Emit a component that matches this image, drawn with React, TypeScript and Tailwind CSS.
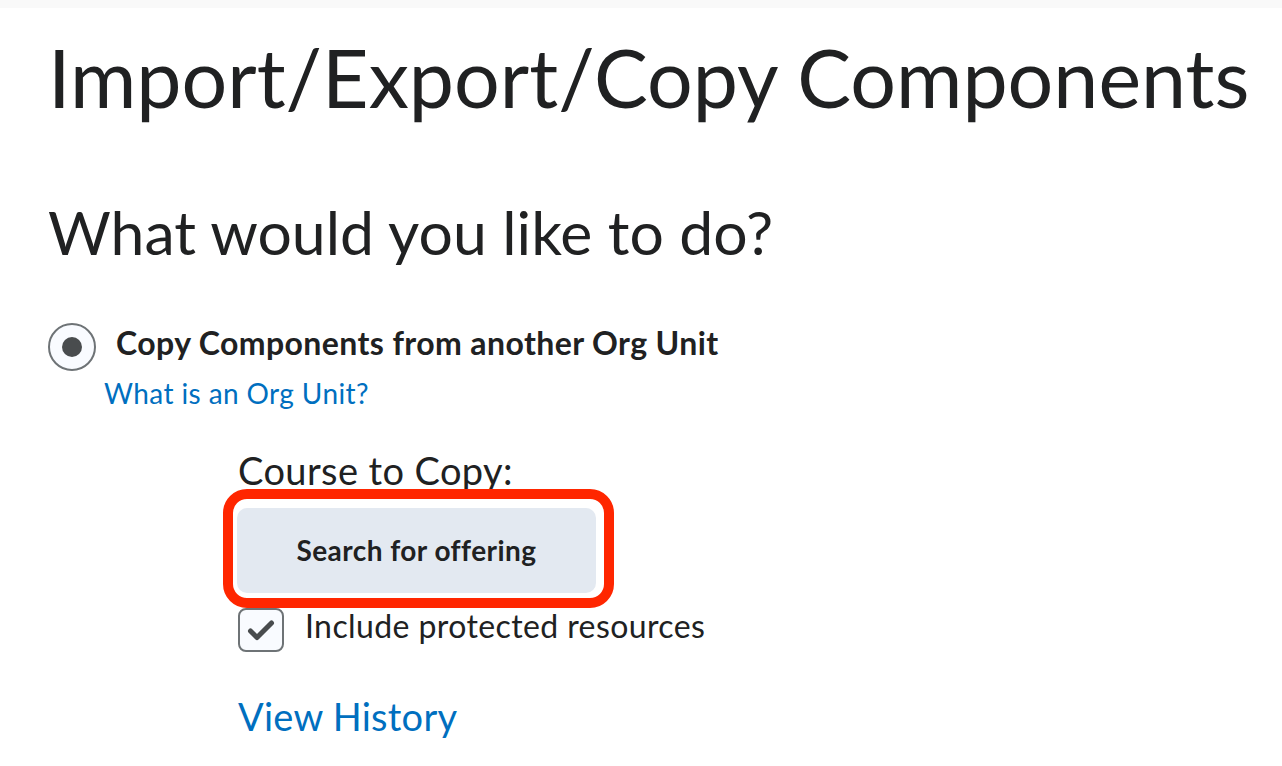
import React from "react";

export default function App() {
  return (
    <div className="w-[1282px] h-[766px] bg-white overflow-hidden text-[#202122]" style={{ fontFamily: "Lato, 'Noto Sans', sans-serif" }}>
      <div className="h-[8px] bg-[#f9f9f9]" />
      <div className="pl-[48px] flex flex-col items-start">
        <h1 className="mt-[21px] text-[80.7px] leading-[1.2] font-normal">Import/Export/Copy Components</h1>
        <h2 className="mt-[70px] text-[60.7px] leading-[1.2] font-normal">What would you like to do?</h2>
        <div className="mt-[52px] flex items-start gap-[20px]">
          <div className="mt-[2px] w-[48px] h-[48px] rounded-full border-2 border-[#6e7376] bg-[#f9fbff] flex items-center justify-center">
            <div className="w-[20px] h-[20px] rounded-full bg-[#494c4e]" />
          </div>
          <span className="mt-[3px] text-[32px] leading-[1.2] font-bold tracking-[0.4px]">Copy Components from another Org Unit</span>
        </div>
        <a className="mt-[6px] ml-[56px] text-[28px] leading-[1.2] tracking-[0.4px] text-[#006fbf]">What is an Org Unit?</a>
        <div className="ml-[189px] flex flex-col items-start">
          <div className="mt-[38px] ml-[1px] text-[38px] leading-[1.2] tracking-[0.4px]">Course to Copy:</div>
          <div className="relative mt-[14px]">
            <button className="w-[359px] h-[85px] rounded-[10px] bg-[#e3e9f1] text-[28px] font-bold tracking-[0.45px] text-[#202122]">Search for offering</button>
            <div className="absolute left-[-14px] top-[-19px] right-[-18px] bottom-[-15px] border-[10px] border-[#ff2600] rounded-[24px] pointer-events-none" />
          </div>
          <div className="mt-[11px] flex items-start gap-[21px]">
            <div className="mt-[4px] ml-[1px] w-[46px] h-[44px] rounded-[8px] border-2 border-[#6e7376] bg-[#f9fbff] flex items-center justify-center">
              <svg width="30" height="24" viewBox="0 0 30 24">
                <path d="M4.5 13 L11 19.5 L25.5 5" fill="none" stroke="#494c4e" strokeWidth="5" strokeLinecap="round" strokeLinejoin="round" />
              </svg>
            </div>
            <span className="mt-[3px] text-[32px] leading-[1.2] tracking-[0.4px]">Include protected resources</span>
          </div>
          <a className="mt-[42px] ml-[1px] text-[38px] leading-[1.2] tracking-[0.25px] text-[#006fbf]">View History</a>
        </div>
      </div>
    </div>
  );
}
